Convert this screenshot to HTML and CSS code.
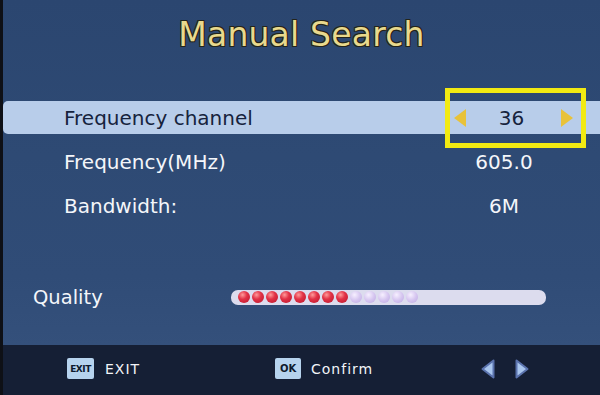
FILE: index.html
```html
<!DOCTYPE html>
<html>
<head>
<meta charset="utf-8">
<link rel="stylesheet" href="styles.css">
</head>
<body>
<div class="screen">
  <div class="main">
    <h1 class="title">Manual Search</h1>
    <div class="menu">
      <div class="row active">
        <span class="label">Frequency channel</span>
        <span class="value">
          <svg class="sel-arrow" width="12" height="18" viewBox="0 0 12 18"><polygon points="12,0 0,9 12,18" fill="#e8c23a"/></svg>
          <span class="num">36</span>
          <svg class="sel-arrow" width="12" height="18" viewBox="0 0 12 18"><polygon points="0,0 12,9 0,18" fill="#e8c23a"/></svg>
        </span>
        <div class="focus-box"></div>
      </div>
      <div class="row">
        <span class="label">Frequency(MHz)</span>
        <span class="value">605.0</span>
      </div>
      <div class="row">
        <span class="label">Bandwidth:</span>
        <span class="value">6M</span>
      </div>
    </div>
    <div class="quality">
      <span class="q-label">Quality</span>
      <div class="q-bar">
        <span class="dot on"></span><span class="dot on"></span><span class="dot on"></span><span class="dot on"></span>
        <span class="dot on"></span><span class="dot on"></span><span class="dot on"></span><span class="dot on"></span>
        <span class="dot off"></span><span class="dot off"></span><span class="dot off"></span><span class="dot off"></span><span class="dot off"></span>
      </div>
    </div>
  </div>
  <div class="footer">
    <div class="key key-exit"><span class="kbox kbox-exit">EXIT</span><span class="ktext">EXIT</span></div>
    <div class="key key-ok"><span class="kbox kbox-ok">OK</span><span class="ktext">Confirm</span></div>
    <div class="key key-nav">
      <svg width="14" height="20" viewBox="0 0 14 20"><polygon points="12.5,1.5 1.5,10 12.5,18.5" fill="#a9c6ee" stroke="#5a72ad" stroke-width="2" stroke-linejoin="round"/></svg>
      <svg width="14" height="20" viewBox="0 0 14 20"><polygon points="1.5,1.5 12.5,10 1.5,18.5" fill="#a9c6ee" stroke="#5a72ad" stroke-width="2" stroke-linejoin="round"/></svg>
    </div>
  </div>
</div>
</body>
</html>
```
FILE: styles.css
```css
html, body {
  margin: 0;
  padding: 0;
  width: 600px;
  height: 395px;
  overflow: hidden;
  background: #111;
}
.screen {
  width: 597px;
  height: 395px;
  border-left: 3px solid #0e1016;
  display: flex;
  flex-direction: column;
  font-family: "DejaVu Sans", "Liberation Sans", sans-serif;
}
.main {
  height: 345px;
  background: linear-gradient(180deg, #2b4670 0%, #2e4a74 45%, #304c77 80%, #34507b 100%);
  display: flex;
  flex-direction: column;
}
.title {
  margin: 0;
  height: 101px;
  padding-top: 15px;
  box-sizing: border-box;
  text-align: center;
  font-size: 33px;
  font-weight: normal;
  color: #e9d98d;
  letter-spacing: 0.2px;
  text-shadow: 1px 1px 0 #24241a, -1px -1px 0 #24241a, 1px -1px 0 #24241a, -1px 1px 0 #24241a;
}
.menu {
  display: flex;
  flex-direction: column;
  gap: 11px;
}
.row {
  position: relative;
  height: 33px;
  display: flex;
  align-items: center;
  color: #f4f6fa;
  font-size: 20px;
}
.row.active {
  background: #b8cdea;
  color: #16233d;
  border-radius: 5px 0 0 5px;
}
.label {
  flex: 1;
  padding-left: 61px;
}
.value {
  width: 134px;
  margin-right: 20px;
  box-sizing: border-box;
  text-align: center;
  padding-right: 18px;
}
.row.active .value {
  display: flex;
  align-items: center;
  justify-content: space-between;
  padding: 0 7px 0 8px;
}
.sel-arrow {
  display: block;
}
.num {
  margin-right: 4px;
}
.focus-box {
  position: absolute;
  left: 442px;
  top: -13px;
  width: 141px;
  height: 60px;
  box-sizing: border-box;
  border: 5px solid #f2ea12;
}
.quality {
  margin-top: 59px;
  height: 32px;
  display: flex;
  align-items: center;
  color: #f4f6fa;
  font-size: 19.5px;
}
.q-label {
  width: 228px;
  padding-left: 30px;
  box-sizing: border-box;
}
.q-bar {
  width: 315px;
  height: 15px;
  border-radius: 7px;
  background: #dcdcee;
  display: flex;
  align-items: center;
  gap: 2px;
  padding-left: 7px;
  box-sizing: border-box;
}
.dot {
  width: 12px;
  height: 12px;
  border-radius: 50%;
}
.dot.on {
  background: radial-gradient(circle at 38% 32%, #ff9a9a 0%, #e23246 40%, #b8142c 100%);
}
.dot.off {
  background: radial-gradient(circle at 38% 32%, #f6f0ff 0%, #d6c6f0 50%, #bba8e2 100%);
}
.footer {
  height: 50px;
  background: #151f35;
  display: flex;
  align-items: center;
  padding-left: 64px;
  padding-bottom: 3px;
  box-sizing: border-box;
}
.key {
  display: flex;
  align-items: center;
}
.key-exit { width: 208px; gap: 11px; }
.key-ok { width: 206px; gap: 10px; }
.key-nav { gap: 20px; }
.kbox {
  height: 21px;
  background: #b6d3ee;
  color: #0e1a2c;
  font-weight: bold;
  display: flex;
  align-items: center;
  justify-content: center;
  border-radius: 2px;
}
.kbox-exit {
  width: 27px;
  font-size: 9px;
  letter-spacing: -0.5px;
}
.kbox-ok {
  width: 26px;
  font-size: 10px;
}
.ktext {
  color: #f2f4f8;
  font-size: 14px;
  letter-spacing: 1px;
}
.key-nav svg { display: block; }
```
